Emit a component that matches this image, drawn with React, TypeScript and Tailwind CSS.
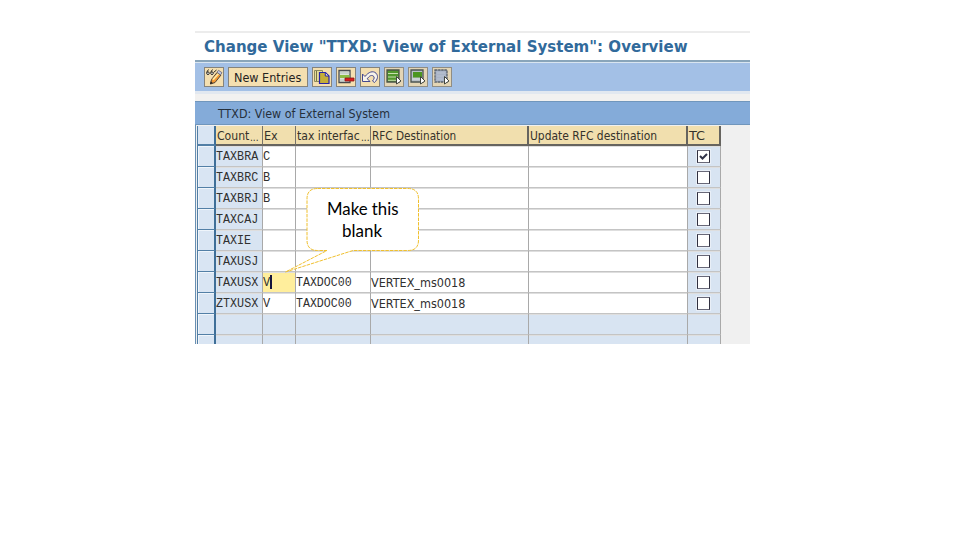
import { useLayoutEffect, useRef, useState, type ReactNode } from "react";

const UI = "font-['DejaVu_Sans_Condensed','DejaVu_Sans',sans-serif]";
const MONO = "font-['Liberation_Mono',monospace]";

/* One line of text, stretched or squeezed to the given width. */
function Fit({ w, className = "", children }: { w: number; className?: string; children: ReactNode }) {
  const ref = useRef<HTMLSpanElement>(null);
  const [k, setK] = useState(1);
  useLayoutEffect(() => {
    if (ref.current) setK(w / ref.current.offsetWidth);
  }, [w]);
  return (
    <span className="block shrink-0 whitespace-nowrap" style={{ width: w }}>
      <span ref={ref} className={`inline-block origin-left ${className}`} style={{ transform: `scaleX(${k})` }}>
        {children}
      </span>
    </span>
  );
}

function ToolButton({ children, dim = false }: { children: ReactNode; dim?: boolean }) {
  return (
    <button className={`size-5 shrink-0 border ${dim ? "border-[#908d84] bg-[#e3d5b5]" : "border-[#85837c] bg-[#f4dfb0]"}`}>
      <svg viewBox="0 0 18 18" className="block size-[18px]">{children}</svg>
    </button>
  );
}

function Pointer() {
  return <path d="M11.5 8.500v7.500l4.500-3z" fill="#fff" stroke="#41453e" strokeWidth="1" />;
}

function Toolbar() {
  return (
    <div className="flex h-7 items-center gap-1 bg-[#a3c0e6] pl-[9px]">
      <ToolButton>
        <path d="M3.500 1.500 1.500 4.500M7.500 1.500 5.500 4.500M8.500 4.500l3-2.500" fill="none" stroke="#28251f" />
        <circle cx="3" cy="5.200" r="1.300" fill="#fff" stroke="#28251f" />
        <circle cx="7" cy="5.200" r="1.300" fill="#fff" stroke="#28251f" />
        <path d="m6.500 11.500 5.500-7 4 2.500-6 7.500-4.500 1.500z" fill="#f39a35" stroke="#4f4338" />
        <path d="m8 11.700 5.500-6.200" stroke="#ffe8a0" strokeWidth="1.800" />
        <path d="m12 4.300 1.500-2 3.500 2.400-1.500 2.200z" fill="#c9cce0" stroke="#5f6172" strokeWidth=".8" />
        <path d="m5 16.200.8-3 2 1.700z" fill="#252525" />
      </ToolButton>
      <button className={`flex h-5 w-20 shrink-0 items-center border border-[#85837c] bg-[#f4dfb0] pt-px pl-[5px] text-[12.5px] leading-[18px] text-[#24221e] ${UI}`}>
        <Fit w={67}>New Entries</Fit>
      </button>
      <ToolButton>
        <path d="M1.500 2.500h8v11h-8z" fill="#e5dd9a" stroke="#8d8a5b" />
        <path d="M3.500 3v10" stroke="#777348" />
        <path d="M6.500 4.500h6l3.500 3.500v7.500h-9.500z" fill="#c5ae36" stroke="#2824a8" strokeWidth="1.200" />
        <path d="M12.300 4.500V8H16z" fill="#fffbe2" stroke="#2824a8" />
      </ToolButton>
      <ToolButton>
        <path d="M2 2.500h11v12H2z" fill="#dce3d8" stroke="#484c50" strokeWidth="1.300" />
        <path d="M3 5h9.500M3 12h10" stroke="#b4bfc0" />
        <path d="M3 7h9.500v3H3z" fill="#8cbd45" />
        <path d="M8 10h9v3H8z" fill="#d91b1b" stroke="#8c1717" strokeWidth=".8" />
      </ToolButton>
      <ToolButton>
        <path
          d="M1.500 6v7.500H9L6.300 10.800C8 8.200 10 6.800 12 7.800c1.800 1 1.500 3-.5 5.200l2 1.500c3.300-3.300 4-6.500 1.500-9.300C12 2.300 7.500 4 4 8.500z"
          fill="#f8f4ea"
          stroke="#45498e"
        />
      </ToolButton>
      <ToolButton dim>
        <path d="M2 2h12v12H2z" fill="#52982e" stroke="#4c544a" strokeWidth="1.300" />
        <path d="M3 5.500h10M3 9h10M3 12.300h8" stroke="#c7dfad" />
        <Pointer />
      </ToolButton>
      <ToolButton dim>
        <path d="M2 2h12v12H2z" fill="#b8c0c6" stroke="#4c5451" strokeWidth="1.300" />
        <path d="M4 4h9v5.500H4z" fill="#4c9620" />
        <path d="M3 11h8" stroke="#e0e5e5" />
        <Pointer />
      </ToolButton>
      <ToolButton dim>
        <path d="M2 2h12v12H2z" fill="#a9b4c7" />
        <path d="M2 2h12v12H2z" fill="none" stroke="#59616b" strokeWidth="1.300" strokeDasharray="2.500 .6" />
        <path d="M4 5h8M4 8h8M4 11h6" stroke="#bac3d2" />
        <Pointer />
      </ToolButton>
    </div>
  );
}

const GRID = "grid grid-cols-[19px_47px_33px_75px_158px_159px_33px]";

function HeadCell({ w, text, more = false, wide = false }: { w: number; text: string; more?: boolean; wide?: boolean }) {
  return (
    <div className={`flex items-start overflow-hidden border-b-2 border-b-[#66645f] bg-[#f1dfae] pl-px text-[12.5px] leading-[20px] text-[#35322b] ${UI} ${wide ? "border-r-2 border-r-[#66645f]" : "border-r border-r-[#77736a]"}`}>
      <Fit w={w}>{text}</Fit>
      {more && <span className="ml-px text-[10px] leading-[24px]">...</span>}
    </div>
  );
}

interface Row {
  key: string;
  ex?: string;
  tax?: string;
  rfc?: string;
  checked?: boolean;
  active?: boolean;
}

const rows: Row[] = [
  { key: "TAXBRA", ex: "C", checked: true },
  { key: "TAXBRC", ex: "B" },
  { key: "TAXBRJ", ex: "B" },
  { key: "TAXCAJ" },
  { key: "TAXIE" },
  { key: "TAXUSJ" },
  { key: "TAXUSX", ex: "V", tax: "TAXDOC00", rfc: "VERTEX_ms0018", active: true },
  { key: "ZTXUSX", ex: "V", tax: "TAXDOC00", rfc: "VERTEX_ms0018" },
];

function Selector() {
  return <div className="border-r-2 border-b border-l border-[#527fa6] border-r-[#3f6f98] bg-[#d9e5f3] shadow-[inset_1px_1px_0_#eff5fb]" />;
}

const CELL = "flex items-center overflow-hidden border-r border-b border-r-[#a9a9a9] border-b-[#c4c4c4] shadow-[inset_0_1px_0_#dedede]";

function DataRow({ row }: { row: Row }) {
  return (
    <div className={`${GRID} h-[21px] shrink-0 text-[12px] leading-[18px] text-[#303030] ${MONO}`}>
      <Selector />
      <div className={`${CELL} bg-[#d8e4f2] pt-[2px]`}><Fit w={row.key.length * 7}>{row.key}</Fit></div>
      <div className={`${CELL} pt-[2px] ${row.active ? "bg-[#ffee9c]" : "bg-white"}`}>
        {row.ex && <Fit w={7}>{row.ex}</Fit>}
        {row.active && <span className="mb-[2px] h-[14px] w-[2px] bg-[#15153d]" />}
      </div>
      <div className={`${CELL} bg-white pt-[2px]`}>{row.tax && <Fit w={56}>{row.tax}</Fit>}</div>
      <div className={`${CELL} bg-white pt-px text-[12.5px] ${UI}`}>{row.rfc && <Fit w={94}>{row.rfc}</Fit>}</div>
      <div className={`${CELL} bg-white`} />
      <div className={`${CELL} bg-[#d8e4f2] pl-[9px]`}>
        <span className="flex size-[13px] items-center justify-center border border-t-[#686878] border-r-[#303040] border-b-[#686878] border-l-[#303040] bg-white outline outline-[#e9eff7]">
          {row.checked && (
            <svg viewBox="0 0 11 11" className="size-[11px]">
              <path d="m2 5 2.500 2.500L9 3" fill="none" stroke="#303348" strokeWidth="2" />
            </svg>
          )}
        </span>
      </div>
    </div>
  );
}

function EmptyRow() {
  return (
    <div className={`${GRID} h-[21px] shrink-0`}>
      <Selector />
      {[0, 1, 2, 3, 4, 5].map((i) => (
        <div key={i} className={`${CELL} bg-[#d8e4f2]`} />
      ))}
    </div>
  );
}

function Callout() {
  return (
    <div className="absolute top-[187px] left-[283px] h-[87px] w-[138px]">
      <svg viewBox="0 0 138 87" className="absolute inset-0 h-[87px] w-[138px]">
        <path
          d="M34.500 1.500H125q10.500 0 10.500 10.500v41q0 10.500-10.500 10.500H70L2.500 85 44 63.500H34.500Q24 63.500 24 53V12Q24 1.500 34.500 1.500z"
          fill="#fff"
          stroke="#f0c02e"
          strokeDasharray="3.500 1"
        />
      </svg>
      <div className="relative flex flex-col items-center pt-[11px] pl-[20px] font-['Lato',sans-serif] text-[17px] leading-[21.5px] text-black">
        <Fit w={71}>Make this</Fit>
        <Fit w={40}>blank</Fit>
      </div>
    </div>
  );
}

export default function App() {
  return (
    <main className="relative h-[540px] w-[960px] overflow-hidden bg-white pt-[31px] pl-[195px]">
      <section className="flex h-[313px] w-[555px] flex-col overflow-hidden bg-[#f0f0f0]">
        <header className="h-[29px] shrink-0 border-t-2 border-[#ececec] bg-white pl-[9px] font-['DejaVu_Sans',sans-serif] text-[16px] leading-[27px] font-bold text-[#316a9b]">
          <Fit w={484}>Change View "TTXD: View of External System": Overview</Fit>
        </header>
        <div className="shrink-0 border-t-2 border-[#89a5ba]">
          <div className="border-t border-b-3 border-t-[#d9e5f0] border-b-[#e2e8f0]">
            <Toolbar />
          </div>
        </div>
        <div className="h-[7px] shrink-0 bg-[#f2f1f0]" />
        <div className={`flex h-[24px] shrink-0 items-center border-y border-[#7096bc] bg-[#84abd9] pt-[2px] pl-[23px] text-[12.5px] text-[#26303c] ${UI}`}>
          <Fit w={172}>TTXD: View of External System</Fit>
        </div>
        <div className="flex grow flex-col overflow-hidden border-l border-[#6990b3] pl-px">
          <div className={`${GRID} mt-px h-5 shrink-0`}>
            <div className="border-r-2 border-b-2 border-l border-[#527fa6] border-r-[#3f6f98] bg-[#d9e5f3]" />
            <HeadCell w={32} text="Count" more />
            <HeadCell w={14} text="Ex" />
            <HeadCell w={63} text="tax interfac" more />
            <HeadCell w={84} text="RFC Destination" wide />
            <HeadCell w={127} text="Update RFC destination" wide />
            <HeadCell w={16} text="TC" wide />
          </div>
          {rows.map((row) => (
            <DataRow key={row.key} row={row} />
          ))}
          <EmptyRow />
          <EmptyRow />
        </div>
      </section>
      <Callout />
    </main>
  );
}
